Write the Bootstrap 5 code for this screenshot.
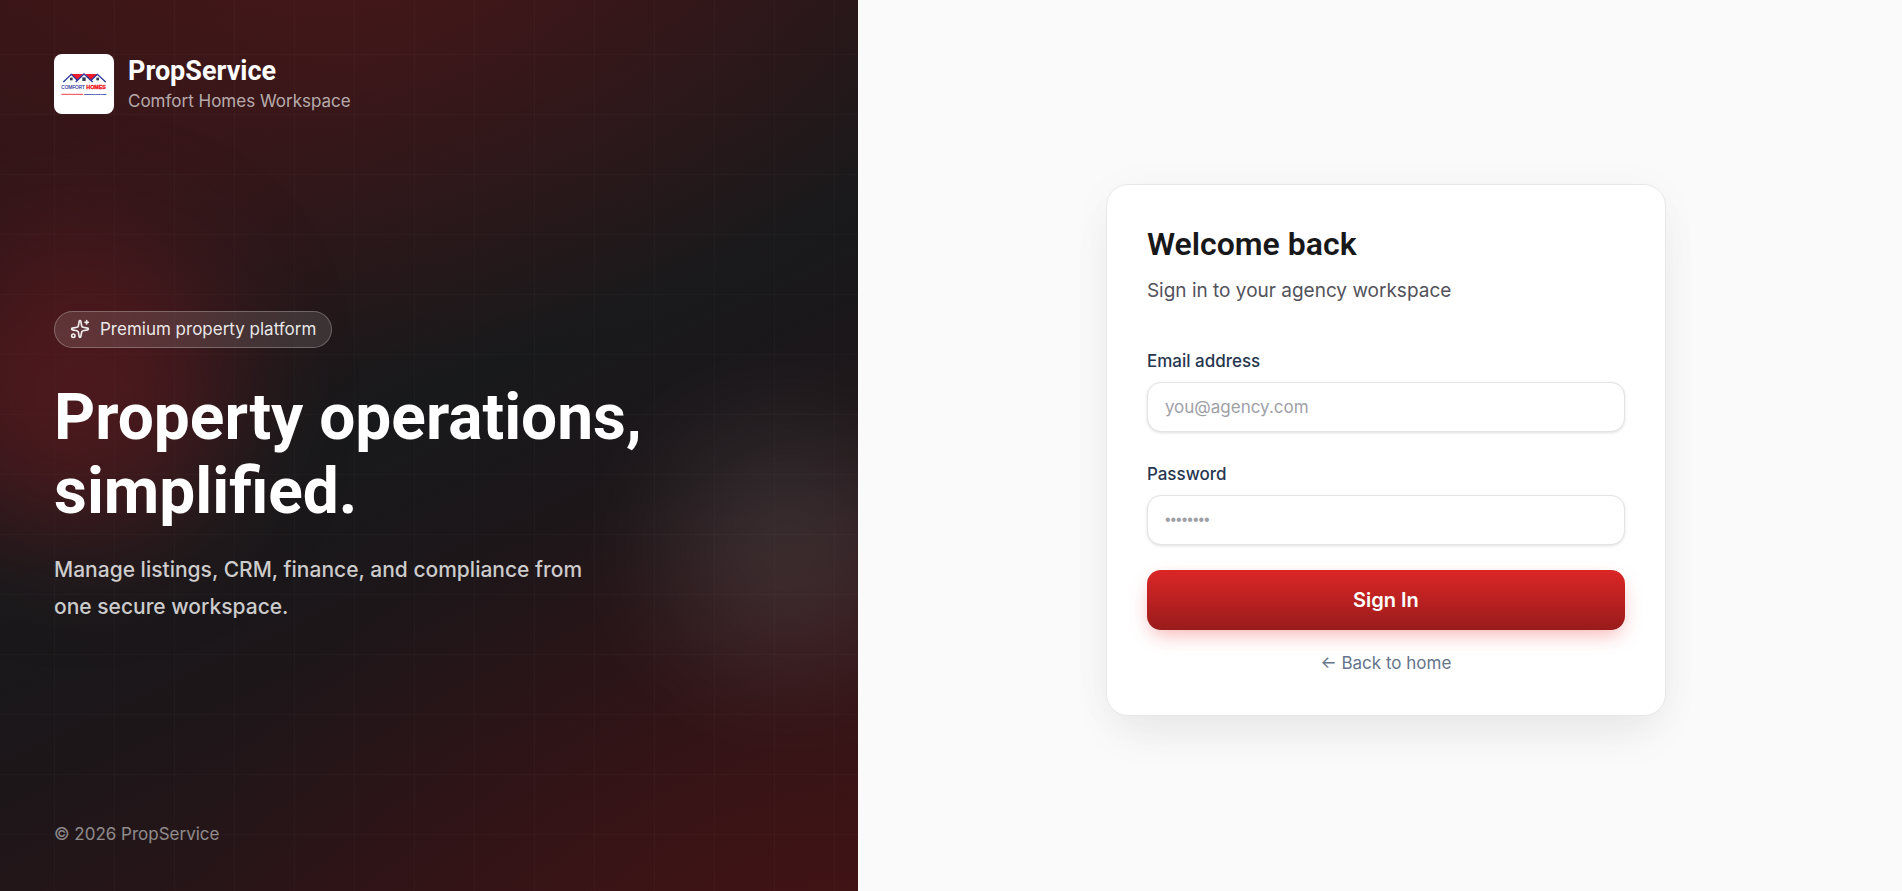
<!DOCTYPE html>
<html lang="en">
<head>
<meta charset="utf-8">
<meta name="viewport" content="width=device-width, initial-scale=1">
<title>PropService – Sign in</title>
<link href="https://cdn.jsdelivr.net/npm/bootstrap@5.3.0/dist/css/bootstrap.min.css" rel="stylesheet">
<style>
body { font-family: Inter, "Liberation Sans", sans-serif; font-size: 17px; background: #fafafa; }
.auth-grid { display: grid; grid-template-columns: 23fr 28fr; }
.brand-panel {
  isolation: isolate;
  padding: 54px 54px 44px;
  color: #fff;
  background:
    linear-gradient(rgba(255,255,255,.02) 1px, transparent 1px) -6px -6px / 60px 60px,
    linear-gradient(90deg, rgba(255,255,255,.02) 1px, transparent 1px) -6px -6px / 60px 60px,
    radial-gradient(ellipse 80% 50% at 40% -8%, rgba(127,29,29,.3), transparent),
    radial-gradient(ellipse 70% 50% at 92% 104%, rgba(100,18,18,.26), transparent),
    linear-gradient(155deg, #2f1416 0%, #2b1518 18%, #18191b 46%, #1d1619 62%, #2b1417 82%, #361416 100%);
}
.glow { z-index: -1; border-radius: 50%; filter: blur(60px); }
.glow-red { width: 300px; height: 300px; left: -70px; top: 240px; background: rgba(140,28,34,.4); }
.glow-grey { width: 240px; height: 240px; right: -50px; top: 430px; background: rgba(255,255,255,.1); }
.logo-tile { width: 60px; height: 60px; border-radius: 8px; background: #fff; }
.brand-lockup { gap: 14px; }
.display-face { font-family: Roboto, "Liberation Sans", sans-serif; font-weight: 700; }
.brand-name { font-size: 27px; line-height: 35px; }
.brand-sub { line-height: 25px; color: rgba(255,255,255,.65); }
.tag-pill { padding: 5px 15px; border: 1px solid rgba(255,255,255,.25); background: rgba(255,255,255,.12); color: rgba(255,255,255,.9); line-height: 25px; gap: 10px; }
.hero-title { font-size: 64px; line-height: 74px; margin: 33px 0 22px; }
.hero-copy { font-size: 21px; font-weight: 500; line-height: 37px; max-width: 560px; color: rgba(255,255,255,.78); }
.copyright { line-height: 26px; color: rgba(255,255,255,.5); }
.form-panel { padding: 9px 0 0 12px; }
.login-card { width: 560px; max-width: 100%; padding: 40px 40px 38px; border: 1px solid #e8e8ea; border-radius: 22px; box-shadow: 0 24px 48px -12px rgba(24,24,40,.08), 0 4px 44px rgba(24,24,27,.03); }
.login-title { font-size: 32px; line-height: 38px; color: #18181b; margin-bottom: 13px; font-weight: 600; }
.login-sub { font-size: 19px; line-height: 30px; color: #52525b; margin-bottom: 42px; }
.field-label { font-weight: 500; line-height: 26px; color: #27364f; margin-bottom: 8px; }
.field-box { height: 50px; padding: 0 17px; font-size: 17px; border: 1px solid #e4e4e7; border-radius: 14px; box-shadow: 0 1px 3px rgba(0,0,0,.12); margin-bottom: 29px; }
.field-box::placeholder { color: #9f9fa8; }
.field-last { margin-bottom: 25px; font-family: "Liberation Sans", sans-serif; font-size: 16px; }
.btn-signin { height: 60px; border: 0; border-radius: 14px; font-size: 20px; font-weight: 600; color: #fff; background: linear-gradient(#dc2626, #991b1b); box-shadow: 0 8px 20px -4px rgba(239,68,68,.42); }
.btn-signin:hover { color: #fff; }
.home-link { margin-top: 20px; line-height: 26px; color: #64748b; }
@media (max-width: 991px) { .auth-grid { grid-template-columns: 1fr; } .form-panel { padding: 48px 24px; } .brand-panel { gap: 64px; } }
</style>
</head>
<body>
<div class="auth-grid min-vh-100">
  <aside class="brand-panel position-relative overflow-hidden d-flex flex-column justify-content-between">
    <div class="glow glow-red position-absolute"></div>
    <div class="glow glow-grey position-absolute"></div>
    <header class="brand-lockup d-flex align-items-center">
      <div class="logo-tile flex-shrink-0">
        <svg width="60" height="60" viewBox="0 0 180 180" role="img" aria-label="Comfort Homes">
          <g fill="#ed1c2b">
            <path d="M49 60H87L75 74L68 81Z"/><path d="M94 60H132L113 82L104 74Z"/>
          </g>
          <g fill="#fff" stroke="#2b359b" stroke-width="4">
            <path d="M106 84L130 61L155 84"/><path d="M28 84L52 61L75 84"/><path d="M65 84L90 60L116 84"/>
          </g>
          <g fill="#333a55"><rect x="48" y="71" width="8" height="8"/><rect x="85" y="70" width="10" height="11"/><rect x="127" y="71" width="8" height="8"/></g>
          <text x="22" y="106" font-family="Liberation Sans" font-size="14" fill="#3a3f9c" stroke="#3a3f9c" stroke-width=".5">COMFORT</text>
          <text x="97" y="106" font-family="Liberation Sans" font-size="16" font-weight="700" fill="#f01522" stroke="#f01522">HOMES</text>
          <path d="M22 121H87" stroke="#f0454e" stroke-width="3"/>
          <text x="90" y="123" font-family="Liberation Sans" font-size="6" font-weight="700" fill="#2b359b" stroke="#2b359b" stroke-width=".5">finding your next home</text>
        </svg>
      </div>
      <div>
        <div class="brand-name display-face">PropService</div>
        <div class="brand-sub">Comfort Homes Workspace</div>
      </div>
    </header>
    <main>
      <div class="tag-pill d-inline-flex align-items-center rounded-pill">
        <svg width="20" height="20" viewBox="0 0 24 24" fill="none" stroke="currentColor" stroke-width="2" stroke-linecap="round" stroke-linejoin="round" aria-hidden="true">
          <path d="M11.017 2.814a1 1 0 0 1 1.966 0l1.051 5.558a2 2 0 0 0 1.594 1.594l5.558 1.051a1 1 0 0 1 0 1.966l-5.558 1.051a2 2 0 0 0-1.594 1.594l-1.051 5.558a1 1 0 0 1-1.966 0l-1.051-5.558a2 2 0 0 0-1.594-1.594l-5.558-1.051a1 1 0 0 1 0-1.966l5.558-1.051a2 2 0 0 0 1.594-1.594z"/>
          <path d="M20 2v4M22 4h-4"/><circle cx="4" cy="20" r="2"/>
        </svg>
        <span>Premium property platform</span>
      </div>
      <h1 class="hero-title display-face">Property operations,<br>simplified.</h1>
      <p class="hero-copy mb-0">Manage listings, CRM, finance, and compliance from one secure workspace.</p>
    </main>
    <footer class="copyright">© 2026 PropService</footer>
  </aside>
  <section class="form-panel d-flex align-items-center justify-content-center">
    <form class="login-card bg-white">
      <h2 class="login-title display-face">Welcome back</h2>
      <p class="login-sub">Sign in to your agency workspace</p>
      <label class="field-label d-block" for="email">Email address</label>
      <input class="form-control field-box" type="email" id="email" placeholder="you@agency.com">
      <label class="field-label d-block" for="password">Password</label>
      <input class="form-control field-box field-last" type="password" id="password" placeholder="••••••••">
      <button class="btn btn-signin w-100 d-block" type="submit">Sign In</button>
      <div class="text-center"><a class="home-link d-inline-block text-decoration-none" href="#">← Back to home</a></div>
    </form>
  </section>
</div>
<script src="https://cdn.jsdelivr.net/npm/bootstrap@5.3.0/dist/js/bootstrap.bundle.min.js"></script>
</body>
</html>
